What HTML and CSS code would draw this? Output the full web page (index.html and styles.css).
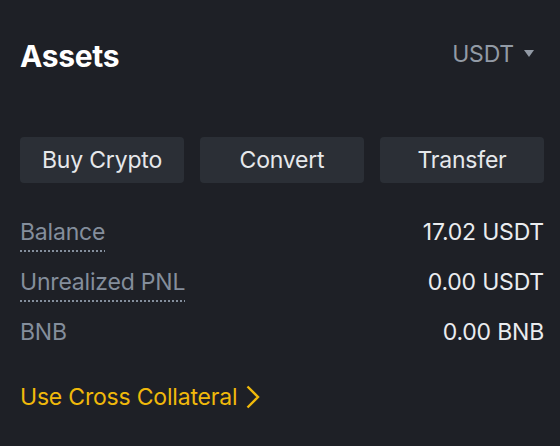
FILE: index.html
```html
<!DOCTYPE html>
<html>
<head>
<meta charset="utf-8">
<link rel="stylesheet" href="styles.css">
</head>
<body>
<div class="panel">
  <div class="header">
    <div class="title">Assets</div>
    <div class="currency">USDT <span class="caret"></span></div>
  </div>
  <div class="actions">
    <div class="btn">Buy Crypto</div>
    <div class="btn">Convert</div>
    <div class="btn">Transfer</div>
  </div>
  <div class="rows">
    <div class="row"><span class="label dotted">Balance</span><span class="value">17.02 USDT</span></div>
    <div class="row"><span class="label dotted">Unrealized PNL</span><span class="value">0.00 USDT</span></div>
    <div class="row"><span class="label">BNB</span><span class="value">0.00 BNB</span></div>
  </div>
  <div class="link">Use Cross Collateral
    <svg class="chev" width="16" height="24" viewBox="0 0 16 24"><path d="M2.5 1.5 L13 12 L2.5 22.5" fill="none" stroke="#F0B90B" stroke-width="2.4"/></svg>
  </div>
</div>
</body>
</html>
```
FILE: styles.css
```css
html, body {
  margin: 0;
  padding: 0;
  background: #1E2026;
  width: 560px;
  height: 446px;
  overflow: hidden;
}
.panel {
  padding: 38px 16px 0 20px;
  font-family: Inter, "Noto Sans", sans-serif;
  font-size: 23px;
  letter-spacing: -0.2px;
}
.header {
  display: flex;
  justify-content: space-between;
  align-items: center;
  height: 36px;
}
.title {
  color: #FFFFFF;
  font-size: 30px;
  font-weight: 700;
  line-height: 36px;
  letter-spacing: -0.3px;
}
.currency {
  color: #929AA5;
  font-size: 23px;
  line-height: 36px;
  display: flex;
  align-items: center;
  gap: 10px;
  margin-top: -4px;
  margin-right: 10px;
}
.caret {
  width: 0;
  height: 0;
  border-left: 5px solid transparent;
  border-right: 5px solid transparent;
  border-top: 7px solid #929AA5;
  margin-top: -2px;
}
.actions {
  display: flex;
  gap: 16px;
  margin-top: 63px;
}
.btn {
  flex: 1;
  height: 46px;
  background: #2B2F36;
  border-radius: 4px;
  color: #E6E8EB;
  display: flex;
  align-items: center;
  justify-content: center;
  font-size: 23px;
}
.rows {
  margin-top: 33px;
}
.row {
  height: 50px;
  display: flex;
  justify-content: space-between;
  align-items: flex-start;
  line-height: 32px;
}
.label {
  color: #848E9C;
}
.dotted {
  padding-bottom: 4px;
  background-image: repeating-linear-gradient(90deg, #848E9C 0 2px, transparent 2px 4px);
  background-size: 100% 2px;
  background-position: 0 100%;
  background-repeat: no-repeat;
}
.value {
  color: #EAECEF;
}
.link {
  margin-top: 15px;
  color: #F0B90B;
  line-height: 32px;
  display: flex;
  align-items: center;
  gap: 8px;
}
.chev {
  display: block;
}
```
